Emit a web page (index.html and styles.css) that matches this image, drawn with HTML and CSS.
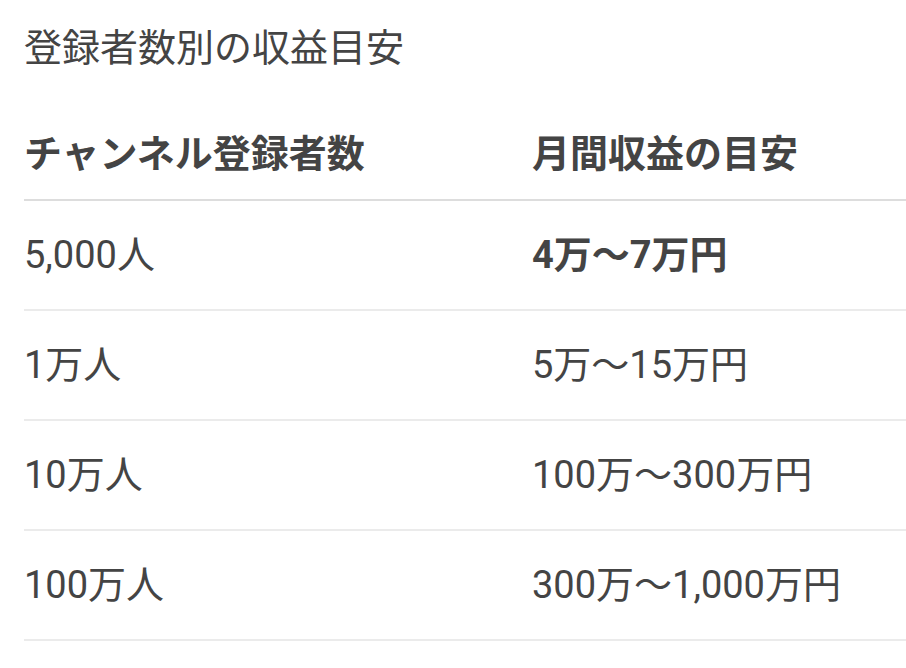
FILE: index.html
```html
<!DOCTYPE html>
<html lang="ja">
<head>
<meta charset="utf-8">
<link rel="stylesheet" href="styles.css">
</head>
<body>
<div class="wrap">
  <p class="title">登録者数別の収益目安</p>
  <div class="income">
    <div class="row head"><div class="c1">チャンネル登録者数</div><div>月間収益の目安</div></div>
    <div class="row"><div class="c1">5,000人</div><div class="strong">4万〜7万円</div></div>
    <div class="row"><div class="c1">1万人</div><div>5万〜15万円</div></div>
    <div class="row"><div class="c1">10万人</div><div>100万〜300万円</div></div>
    <div class="row"><div class="c1">100万人</div><div>300万〜1,000万円</div></div>
  </div>
</div>
</body>
</html>
```

FILE: styles.css
```css
html, body {
  margin: 0;
  padding: 0;
  background: #ffffff;
}
body {
  font-family: Roboto, "Noto Sans CJK JP", "Noto Sans", sans-serif;
  color: #444444;
  font-size: 38px;
  line-height: 55px;
}
.wrap {
  padding-left: 24px;
  overflow: hidden;
}
.title {
  margin: 21px 0 0 0;
  font-weight: 400;
}
.income {
  width: 882px;
  margin-top: 51px;
}
.row {
  display: grid;
  grid-template-columns: 508px 1fr;
  align-items: center;
  box-sizing: border-box;
  height: 110px;
  border-bottom: 2px solid #ebebeb;
}
.row.head {
  height: auto;
  align-items: start;
  padding-bottom: 17px;
  border-bottom-color: #dddddd;
  font-weight: 700;
}
.strong {
  font-weight: 700;
}
```
